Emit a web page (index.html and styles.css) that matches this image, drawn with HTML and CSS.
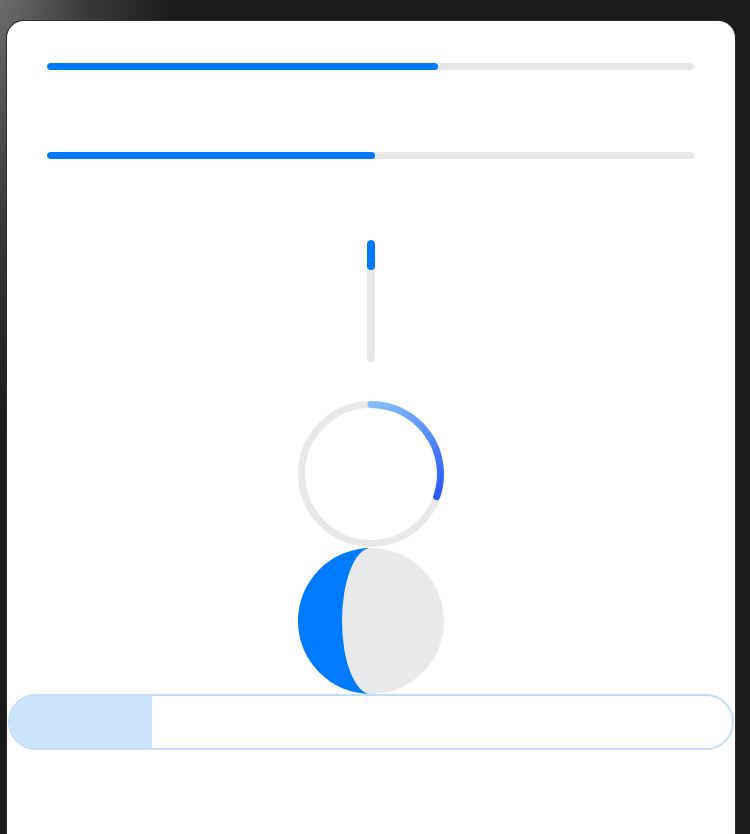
FILE: index.html
```html
<!DOCTYPE html>
<html>
<head>
<meta charset="utf-8">
<link rel="stylesheet" href="styles.css">
</head>
<body>
<div class="card">
  <div class="content">
    <div class="hbar"><div class="hfill" style="width:60.5%"></div></div>
    <div class="hbar second"><div class="hfill" style="width:50.7%"></div></div>
    <div class="vbar"><div class="vfill"></div></div>
    <svg class="ring" width="146" height="146" viewBox="0 0 146 146">
      <defs>
        <linearGradient id="rg" x1="73" y1="3" x2="140" y2="100" gradientUnits="userSpaceOnUse">
          <stop offset="0" stop-color="#86c0ff"/>
          <stop offset="1" stop-color="#2a55ff"/>
        </linearGradient>
      </defs>
      <circle cx="73" cy="73" r="69.5" fill="none" stroke="#e8e8e9" stroke-width="7"/>
      <path d="M73 3.5 A69.5 69.5 0 0 1 138.7 95.6" fill="none" stroke="url(#rg)" stroke-width="7" stroke-linecap="round"/>
    </svg>
    <svg class="moon" width="146" height="146" viewBox="0 0 146 146">
      <circle cx="73" cy="73" r="73" fill="#e8e9eb"/>
      <path d="M73 0 A73 73 0 0 0 73 146 A29 73 0 0 1 73 0 Z" fill="#007aff"/>
    </svg>
  </div>
  <div class="capsule"><div class="cfill"></div></div>
</div>
</body>
</html>
```
FILE: styles.css
```css
html, body {
  margin: 0;
  padding: 0;
  height: 100%;
  overflow: hidden;
}
body {
  background-color: #1c1c1c;
  background-image: radial-gradient(ellipse 170px 430px at 0 0, #6c6c6c 0%, #3a3a3a 50%, #1c1c1c 100%);
  font-family: "Liberation Sans", Arial, sans-serif;
}
.card {
  margin: 21px 15px 0 7px;
  height: 813px;
  background: #ffffff;
  border-radius: 17px 17px 0 0;
  box-shadow: 0 0 0 1px #2b2b2b;
  display: flex;
  flex-direction: column;
}
.content {
  padding: 42px 41px 0 40px;
  display: flex;
  flex-direction: column;
  align-items: center;
}
.hbar {
  align-self: stretch;
  height: 7px;
  background: #e8e8e9;
  border-radius: 4px;
  overflow: hidden;
}
.hbar.second {
  margin-top: 82px;
}
.hfill {
  height: 100%;
  background: #007aff;
  border-radius: 4px;
}
.vbar {
  margin-top: 81px;
  width: 8px;
  height: 122px;
  background: #e8e8e9;
  border-radius: 4px;
  overflow: hidden;
}
.vfill {
  width: 100%;
  height: 30px;
  background: #007aff;
  border-radius: 4px;
}
.ring {
  display: block;
  margin-top: 39px;
}
.moon {
  display: block;
  margin-top: 1px;
}
.capsule {
  margin: 0 1px;
  height: 52px;
  border: 2px solid #c3ddf7;
  border-radius: 28px;
  overflow: hidden;
}
.cfill {
  width: 142px;
  height: 100%;
  background: #cbe4fb;
}
```
